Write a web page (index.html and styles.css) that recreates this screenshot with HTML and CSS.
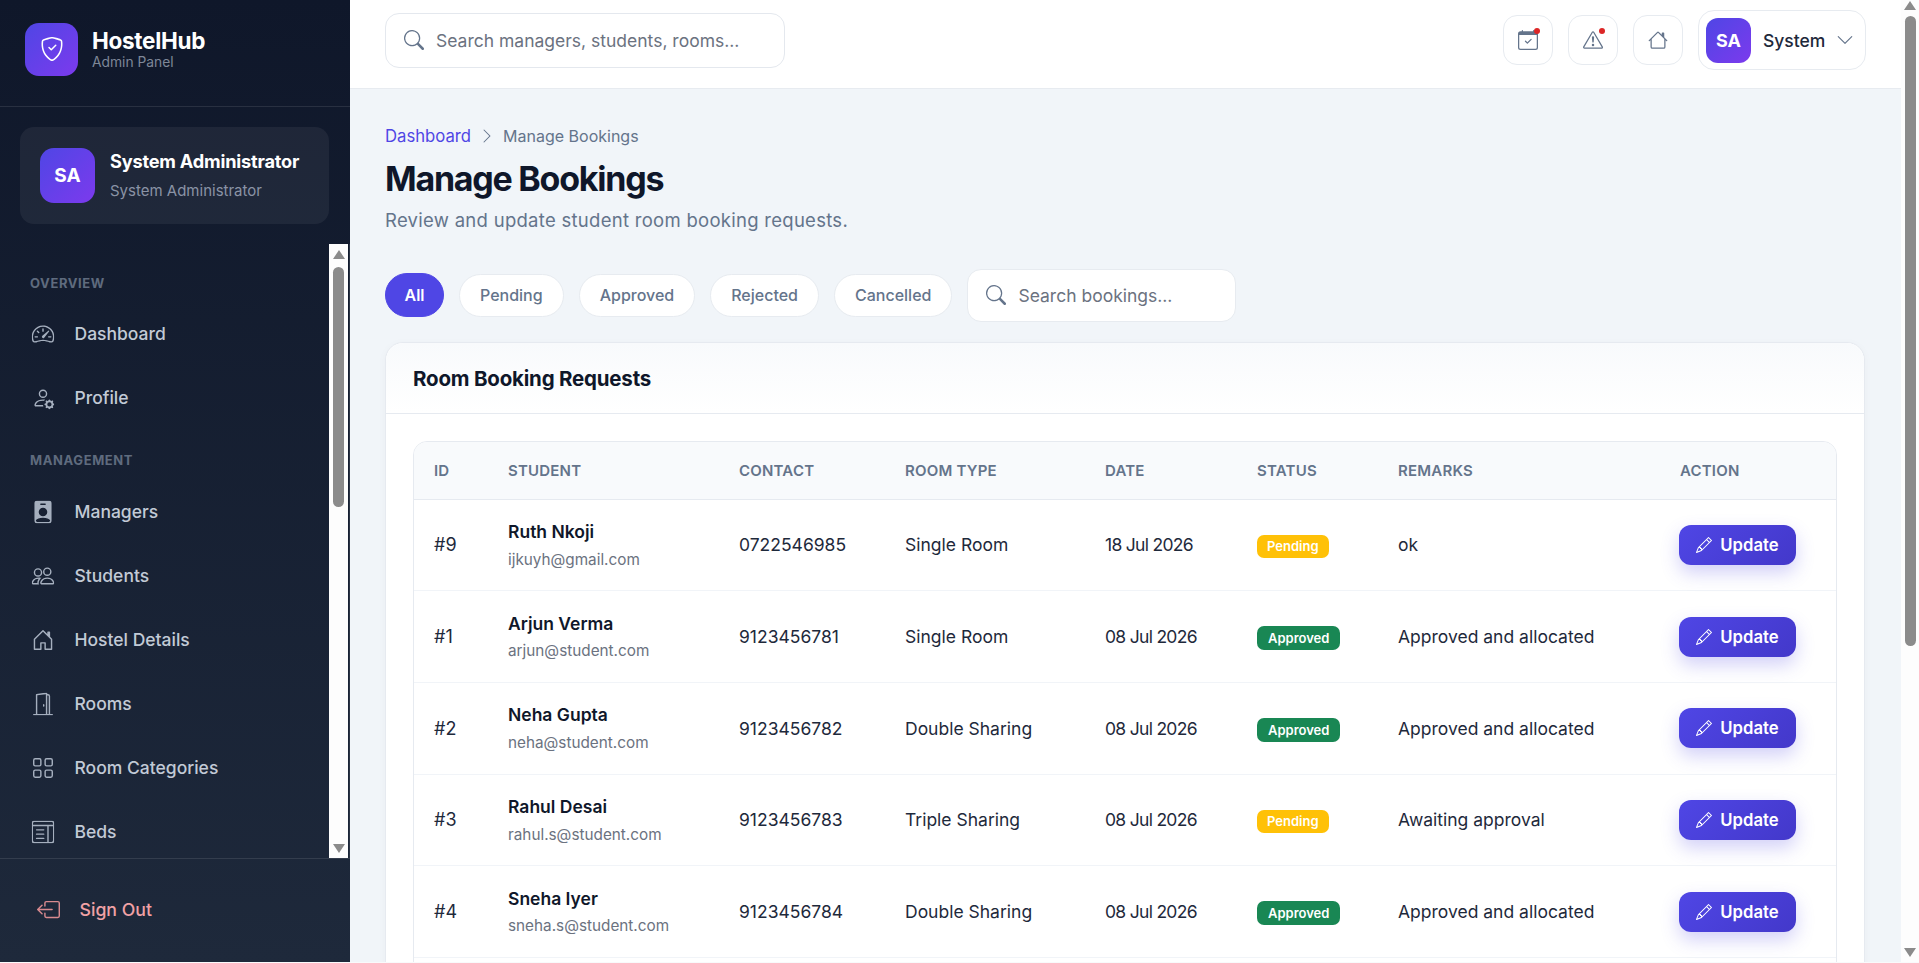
FILE: index.html
```html
<!DOCTYPE html>
<html lang="en">
<head>
<meta charset="utf-8">
<title>Manage Bookings - HostelHub</title>
<link rel="stylesheet" href="styles.css">
</head>
<body>
<svg class="sprite" width="0" height="0" aria-hidden="true">
  <symbol id="i-shield" viewBox="0 0 16 16"><path d="M5.338 1.59a61.44 61.44 0 0 0-2.837.856.481.481 0 0 0-.328.39c-.554 4.157.726 7.19 2.253 9.188a10.725 10.725 0 0 0 2.287 2.233c.346.244.652.42.893.533.12.057.218.095.293.118a.55.55 0 0 0 .101.025.615.615 0 0 0 .1-.025c.076-.023.174-.061.294-.118.24-.113.547-.29.893-.533a10.726 10.726 0 0 0 2.287-2.233c1.527-1.997 2.807-5.031 2.253-9.188a.48.48 0 0 0-.328-.39c-.651-.213-1.75-.56-2.837-.855C9.552 1.29 8.531 1.067 8 1.067c-.53 0-1.552.223-2.662.524zM5.072.56C6.157.265 7.31 0 8 0s1.843.265 2.928.56c1.11.3 2.229.655 2.887.87a1.54 1.54 0 0 1 1.044 1.262c.596 4.477-.787 7.795-2.465 9.99a11.775 11.775 0 0 1-2.517 2.453 7.159 7.159 0 0 1-1.048.625c-.28.132-.581.24-.829.24s-.548-.108-.829-.24a7.158 7.158 0 0 1-1.048-.625 11.777 11.777 0 0 1-2.517-2.453C1.928 10.487.545 7.169 1.141 2.692A1.54 1.54 0 0 1 2.185 1.43 62.456 62.456 0 0 1 5.072.56z"/><path d="M10.854 5.146a.5.5 0 0 1 0 .708l-3 3a.5.5 0 0 1-.708 0l-1.5-1.5a.5.5 0 1 1 .708-.708L7.5 7.793l2.646-2.647a.5.5 0 0 1 .708 0z"/></symbol>
  <symbol id="i-speed" viewBox="0 0 16 16"><path d="M8 4a.5.5 0 0 1 .5.5V6a.5.5 0 0 1-1 0V4.5A.5.5 0 0 1 8 4zM3.732 5.732a.5.5 0 0 1 .707 0l.915.914a.5.5 0 1 1-.708.708l-.914-.915a.5.5 0 0 1 0-.707zM2 10a.5.5 0 0 1 .5-.5h1.586a.5.5 0 0 1 0 1H2.5A.5.5 0 0 1 2 10zm9.5 0a.5.5 0 0 1 .5-.5h1.5a.5.5 0 0 1 0 1H12a.5.5 0 0 1-.5-.5zm.754-4.246a.389.389 0 0 0-.527-.02L7.547 9.31a.91.91 0 1 0 1.302 1.258l3.434-4.297a.389.389 0 0 0-.029-.518z"/><path d="M0 10a8 8 0 1 1 15.547 2.661c-.442 1.253-1.845 1.602-2.932 1.25C11.309 13.488 9.475 13 8 13c-1.474 0-3.31.488-4.615.911-1.087.352-2.49.003-2.932-1.25A7.988 7.988 0 0 1 0 10zm8-7a7 7 0 0 0-6.603 9.329c.203.575.923.876 1.68.63C4.397 12.533 6.358 12 8 12s3.604.532 4.923.96c.757.245 1.477-.056 1.68-.631A7 7 0 0 0 8 3z"/></symbol>
  <symbol id="i-pgear" viewBox="0 0 16 16"><path d="M11 5a3 3 0 1 1-6 0 3 3 0 0 1 6 0ZM8 7a2 2 0 1 0 0-4 2 2 0 0 0 0 4Zm.256 7a4.474 4.474 0 0 1-.229-1.004H3c.001-.246.154-.986.832-1.664C4.484 10.68 5.711 10 8 10c.26 0 .507.009.74.025.226-.341.496-.65.804-.918C9.077 9.038 8.564 9 8 9c-5 0-6 3-6 4s1 1 1 1h5.256Zm3.63-4.54c.18-.613 1.048-.613 1.229 0l.043.148a.64.64 0 0 0 .921.382l.136-.074c.561-.306 1.175.308.87.869l-.075.136a.64.64 0 0 0 .382.92l.149.045c.612.18.612 1.048 0 1.229l-.15.043a.64.64 0 0 0-.38.921l.074.136c.305.561-.309 1.175-.87.87l-.136-.075a.64.64 0 0 0-.92.382l-.045.149c-.18.612-1.048.612-1.229 0l-.043-.15a.64.64 0 0 0-.921-.38l-.136.074c-.561.305-1.175-.309-.87-.87l.075-.136a.64.64 0 0 0-.382-.92l-.148-.045c-.613-.18-.613-1.048 0-1.229l.148-.043a.64.64 0 0 0 .382-.921l-.074-.136c-.306-.561.308-1.175.869-.87l.136.075a.64.64 0 0 0 .92-.382l.045-.149ZM14 12.5a1.5 1.5 0 1 0-3 0 1.5 1.5 0 0 0 3 0Z"/></symbol>
  <symbol id="i-badge" viewBox="0 0 16 16"><path d="M2 2a2 2 0 0 1 2-2h8a2 2 0 0 1 2 2v12a2 2 0 0 1-2 2H4a2 2 0 0 1-2-2V2zm4.5 0a.5.5 0 0 0 0 1h3a.5.5 0 0 0 0-1h-3zM8 11a3 3 0 1 0 0-6 3 3 0 0 0 0 6zm5 2.755C12.146 12.825 10.623 12 8 12s-4.146.826-5 1.755V14a1 1 0 0 0 1 1h8a1 1 0 0 0 1-1v-.245z"/></symbol>
  <symbol id="i-people" viewBox="0 0 16 16"><path d="M15 14s1 0 1-1-1-4-5-4-5 3-5 4 1 1 1 1h8Zm-7.978-1A.261.261 0 0 1 7 12.996c.001-.264.167-1.03.76-1.72C8.312 10.629 9.282 10 11 10c1.717 0 2.687.63 3.24 1.276.593.69.758 1.457.76 1.72l-.008.002a.274.274 0 0 1-.014.002H7.022ZM11 7a2 2 0 1 0 0-4 2 2 0 0 0 0 4Zm3-2a3 3 0 1 1-6 0 3 3 0 0 1 6 0ZM6.936 9.28a5.88 5.88 0 0 0-1.23-.247A7.35 7.35 0 0 0 5 9c-4 0-5 3-5 4 0 .667.333 1 1 1h4.216A2.238 2.238 0 0 1 5 13c0-1.01.377-2.042 1.09-2.904.243-.294.526-.569.846-.816ZM4.92 10A5.493 5.493 0 0 0 4 13H1c0-.26.164-1.03.76-1.724.545-.636 1.492-1.256 3.16-1.275ZM1.5 5.5a3 3 0 1 1 6 0 3 3 0 0 1-6 0Zm3-2a2 2 0 1 0 0 4 2 2 0 0 0 0-4Z"/></symbol>
  <symbol id="i-house" viewBox="0 0 16 16"><path d="M8.707 1.5a1 1 0 0 0-1.414 0L.646 8.146a.5.5 0 0 0 .708.708L2 8.207V13.5A1.5 1.5 0 0 0 3.5 15h9a1.5 1.5 0 0 0 1.5-1.5V8.207l.646.647a.5.5 0 0 0 .708-.708L13 5.793V2.5a.5.5 0 0 0-.5-.5h-1a.5.5 0 0 0-.5.5v1.293L8.707 1.5ZM13 7.207V13.5a.5.5 0 0 1-.5.5h-9a.5.5 0 0 1-.5-.5V7.207l5-5 5 5Z"/></symbol>
  <symbol id="i-hdoor" viewBox="0 0 16 16"><path d="M8.354 1.146a.5.5 0 0 0-.708 0l-6 6A.5.5 0 0 0 1.5 7.5v7a.5.5 0 0 0 .5.5h4.5a.5.5 0 0 0 .5-.5v-4h2v4a.5.5 0 0 0 .5.5H14a.5.5 0 0 0 .5-.5v-7a.5.5 0 0 0-.146-.354L13 5.793V2.5a.5.5 0 0 0-.5-.5h-1a.5.5 0 0 0-.5.5v1.293L8.354 1.146ZM2.5 14V7.707l5.5-5.5 5.5 5.5V14H10v-4a.5.5 0 0 0-.5-.5h-3a.5.5 0 0 0-.5.5v4H2.5Z"/></symbol>
  <symbol id="i-door" viewBox="0 0 16 16"><path d="M8.5 10c-.276 0-.5-.448-.5-1s.224-1 .5-1 .5.448.5 1-.224 1-.5 1z"/><path d="M10.828.122A.5.5 0 0 1 11 .5V1h.5A1.5 1.5 0 0 1 13 2.5V15h1.5a.5.5 0 0 1 0 1h-13a.5.5 0 0 1 0-1H3V1.5a.5.5 0 0 1 .43-.495l7-1a.5.5 0 0 1 .398.117zM11.5 2H11v13h1V2.5a.5.5 0 0 0-.5-.5zM4 1.934V15h6V1.077l-6 .857z"/></symbol>
  <symbol id="i-grid" viewBox="0 0 16 16"><path d="M1 2.5A1.5 1.5 0 0 1 2.5 1h3A1.5 1.5 0 0 1 7 2.5v3A1.5 1.5 0 0 1 5.5 7h-3A1.5 1.5 0 0 1 1 5.5v-3zM2.5 2a.5.5 0 0 0-.5.5v3a.5.5 0 0 0 .5.5h3a.5.5 0 0 0 .5-.5v-3a.5.5 0 0 0-.5-.5h-3zm6.5.5A1.5 1.5 0 0 1 10.5 1h3A1.5 1.5 0 0 1 15 2.5v3A1.5 1.5 0 0 1 13.5 7h-3A1.5 1.5 0 0 1 9 5.5v-3zm1.5-.5a.5.5 0 0 0-.5.5v3a.5.5 0 0 0 .5.5h3a.5.5 0 0 0 .5-.5v-3a.5.5 0 0 0-.5-.5h-3zM1 10.5A1.5 1.5 0 0 1 2.5 9h3A1.5 1.5 0 0 1 7 10.5v3A1.5 1.5 0 0 1 5.5 15h-3A1.5 1.5 0 0 1 1 13.5v-3zm1.5-.5a.5.5 0 0 0-.5.5v3a.5.5 0 0 0 .5.5h3a.5.5 0 0 0 .5-.5v-3a.5.5 0 0 0-.5-.5h-3zm6.5.5A1.5 1.5 0 0 1 10.5 9h3a1.5 1.5 0 0 1 1.5 1.5v3a1.5 1.5 0 0 1-1.5 1.5h-3A1.5 1.5 0 0 1 9 13.5v-3zm1.5-.5a.5.5 0 0 0-.5.5v3a.5.5 0 0 0 .5.5h3a.5.5 0 0 0 .5-.5v-3a.5.5 0 0 0-.5-.5h-3z"/></symbol>
  <symbol id="i-beds" viewBox="0 0 16 16"><path d="M3 6.5a.5.5 0 0 1 .5-.5h5a.5.5 0 0 1 0 1h-5a.5.5 0 0 1-.5-.5zm0 3a.5.5 0 0 1 .5-.5h5a.5.5 0 0 1 0 1h-5a.5.5 0 0 1-.5-.5zm.5 2.5a.5.5 0 0 0 0 1h5a.5.5 0 0 0 0-1h-5z"/><path d="M14 0a2 2 0 0 1 2 2v12a2 2 0 0 1-2 2H2a2 2 0 0 1-2-2V2a2 2 0 0 1 2-2h12zM2 1a1 1 0 0 0-1 1v1h14V2a1 1 0 0 0-1-1H2zM1 4v10a1 1 0 0 0 1 1h9V4H1zm14 0h-3v11h2a1 1 0 0 0 1-1V4z"/></symbol>
  <symbol id="i-out" viewBox="0 0 16 16"><path d="M6 12.5a.5.5 0 0 0 .5.5h8a.5.5 0 0 0 .5-.5v-9a.5.5 0 0 0-.5-.5h-8a.5.5 0 0 0-.5.5v2a.5.5 0 0 1-1 0v-2A1.5 1.5 0 0 1 6.5 2h8A1.5 1.5 0 0 1 16 3.5v9a1.5 1.5 0 0 1-1.5 1.5h-8A1.5 1.5 0 0 1 5 12.5v-2a.5.5 0 0 1 1 0v2z"/><path d="M.146 8.354a.5.5 0 0 1 0-.708l3-3a.5.5 0 1 1 .708.708L1.707 7.5H10.5a.5.5 0 0 1 0 1H1.707l2.147 2.146a.5.5 0 0 1-.708.708l-3-3z"/></symbol>
  <symbol id="i-search" viewBox="0 0 16 16"><path d="M11.742 10.344a6.5 6.5 0 1 0-1.397 1.398h-.001c.03.04.062.078.098.115l3.85 3.85a1 1 0 0 0 1.415-1.414l-3.85-3.85a1.007 1.007 0 0 0-.115-.1zM12 6.5a5.5 5.5 0 1 1-11 0 5.5 5.5 0 0 1 11 0z"/></symbol>
  <symbol id="i-cal" viewBox="0 0 16 16"><path d="M10.854 7.146a.5.5 0 0 1 0 .708l-3 3a.5.5 0 0 1-.708 0l-1.5-1.5a.5.5 0 1 1 .708-.708L7.5 9.793l2.646-2.647a.5.5 0 0 1 .708 0z"/><path d="M3.5 0a.5.5 0 0 1 .5.5V1h8V.5a.5.5 0 0 1 1 0V1h1a2 2 0 0 1 2 2v11a2 2 0 0 1-2 2H2a2 2 0 0 1-2-2V3a2 2 0 0 1 2-2h1V.5a.5.5 0 0 1 .5-.5zM1 4v10a1 1 0 0 0 1 1h12a1 1 0 0 0 1-1V4H1z"/></symbol>
  <symbol id="i-warn" viewBox="0 0 16 16"><path d="M7.938 2.016A.13.13 0 0 1 8.002 2a.13.13 0 0 1 .063.016.146.146 0 0 1 .054.057l6.857 11.667c.036.06.035.124.002.183a.163.163 0 0 1-.054.06.116.116 0 0 1-.066.017H1.146a.115.115 0 0 1-.066-.017.163.163 0 0 1-.054-.06.176.176 0 0 1 .002-.183L7.884 2.073a.147.147 0 0 1 .054-.057zm1.044-.45a1.13 1.13 0 0 0-1.96 0L.165 13.233c-.457.778.091 1.767.98 1.767h13.713c.889 0 1.438-.99.98-1.767L8.982 1.566z"/><path d="M7.002 12a1 1 0 1 1 2 0 1 1 0 0 1-2 0zM7.1 5.995a.905.905 0 1 1 1.8 0l-.35 3.507a.552.552 0 0 1-1.1 0L7.1 5.995z"/></symbol>
  <symbol id="i-down" viewBox="0 0 16 16"><path d="M1.646 4.646a.5.5 0 0 1 .708 0L8 10.293l5.646-5.647a.5.5 0 0 1 .708.708l-6 6a.5.5 0 0 1-.708 0l-6-6a.5.5 0 0 1 0-.708z"/></symbol>
  <symbol id="i-right" viewBox="0 0 16 16"><path d="M4.646 1.646a.5.5 0 0 1 .708 0l6 6a.5.5 0 0 1 0 .708l-6 6a.5.5 0 0 1-.708-.708L10.293 8 4.646 2.354a.5.5 0 0 1 0-.708z"/></symbol>
  <symbol id="i-pencil" viewBox="0 0 16 16"><path d="M12.146.146a.5.5 0 0 1 .708 0l3 3a.5.5 0 0 1 0 .708l-10 10a.5.5 0 0 1-.168.11l-5 2a.5.5 0 0 1-.65-.65l2-5a.5.5 0 0 1 .11-.168l10-10zM11.207 2.5 13.5 4.793 14.793 3.5 12.5 1.207 11.207 2.5zm1.586 3L10.5 3.207 4 9.707V10h.5a.5.5 0 0 1 .5.5v.5h.5a.5.5 0 0 1 .5.5v.5h.293l6.5-6.5zm-9.761 5.175-.106.106-1.528 3.821 3.821-1.528.106-.106A.5.5 0 0 1 5 12.5V12h-.5a.5.5 0 0 1-.5-.5V11h-.5a.5.5 0 0 1-.468-.325z"/></symbol>
</svg>

<div class="app">
  <aside class="sidebar">
    <div class="brand">
      <div class="brand-logo"><svg class="ico ico-logo"><use href="#i-shield"/></svg></div>
      <div class="brand-text">
        <div class="brand-name">HostelHub</div>
        <div class="brand-sub">Admin Panel</div>
      </div>
    </div>
    <div class="user-card">
      <div class="avatar avatar-lg">SA</div>
      <div class="user-text">
        <div class="user-name">System Administrator</div>
        <div class="user-role">System Administrator</div>
      </div>
    </div>
    <div class="nav-row">
      <nav class="nav">
        <div class="nav-label">OVERVIEW</div>
        <a class="nav-item"><svg class="ico ico-nav"><use href="#i-speed"/></svg>Dashboard</a>
        <a class="nav-item"><svg class="ico ico-nav"><use href="#i-pgear"/></svg>Profile</a>
        <div class="nav-label nav-label-next">MANAGEMENT</div>
        <a class="nav-item"><svg class="ico ico-nav"><use href="#i-badge"/></svg>Managers</a>
        <a class="nav-item"><svg class="ico ico-nav"><use href="#i-people"/></svg>Students</a>
        <a class="nav-item"><svg class="ico ico-nav"><use href="#i-hdoor"/></svg>Hostel Details</a>
        <a class="nav-item"><svg class="ico ico-nav"><use href="#i-door"/></svg>Rooms</a>
        <a class="nav-item"><svg class="ico ico-nav"><use href="#i-grid"/></svg>Room Categories</a>
        <a class="nav-item"><svg class="ico ico-nav"><use href="#i-beds"/></svg>Beds</a>
      </nav>
      <div class="scrollbar scrollbar-side">
        <span class="arrow arrow-up"></span>
        <span class="thumb thumb-side"></span>
        <span class="arrow arrow-down"></span>
      </div>
    </div>
    <div class="side-footer">
      <a class="signout"><svg class="ico ico-out"><use href="#i-out"/></svg>Sign Out</a>
    </div>
  </aside>

  <div class="main">
    <header class="topbar">
      <label class="top-search">
        <svg class="ico ico-search"><use href="#i-search"/></svg>
        <input class="top-input" type="text" placeholder="Search managers, students, rooms...">
      </label>
      <div class="top-actions">
        <button class="icon-btn"><svg class="ico ico-top"><use href="#i-cal"/></svg><span class="dot"></span></button>
        <button class="icon-btn"><svg class="ico ico-top"><use href="#i-warn"/></svg><span class="dot"></span></button>
        <button class="icon-btn"><svg class="ico ico-top"><use href="#i-house"/></svg></button>
        <div class="user-pill">
          <div class="avatar avatar-sm">SA</div>
          <span class="pill-name">System</span>
          <svg class="ico ico-chev"><use href="#i-down"/></svg>
        </div>
      </div>
    </header>

    <main class="content">
      <div class="breadcrumb">
        <a class="crumb-link">Dashboard</a>
        <svg class="ico ico-crumb"><use href="#i-right"/></svg>
        <span>Manage Bookings</span>
      </div>
      <h1 class="title">Manage Bookings</h1>
      <p class="subtitle">Review and update student room booking requests.</p>

      <div class="filters">
        <button class="chip chip-active">All</button>
        <button class="chip">Pending</button>
        <button class="chip">Approved</button>
        <button class="chip">Rejected</button>
        <button class="chip">Cancelled</button>
        <label class="filter-search">
          <svg class="ico ico-search"><use href="#i-search"/></svg>
          <input class="filter-input" type="text" placeholder="Search bookings...">
        </label>
      </div>

      <section class="card">
        <div class="card-head">Room Booking Requests</div>
        <div class="card-body">
          <div class="table-wrap">
            <table class="table">
              <colgroup>
                <col class="c-id"><col class="c-student"><col class="c-contact"><col class="c-room"><col class="c-date"><col class="c-status"><col class="c-remarks"><col class="c-action">
              </colgroup>
              <thead>
                <tr><th>ID</th><th>Student</th><th>Contact</th><th>Room Type</th><th>Date</th><th>Status</th><th>Remarks</th><th>Action</th></tr>
              </thead>
              <tbody>
                <tr>
                  <td class="t-id">#9</td>
                  <td><div class="s-name">Ruth Nkoji</div><div class="s-mail">ijkuyh@gmail.com</div></td>
                  <td>0722546985</td><td>Single Room</td><td class="t-date">18 Jul 2026</td>
                  <td><span class="badge badge-pending">Pending</span></td>
                  <td>ok</td>
                  <td><button class="update"><svg class="ico ico-pen"><use href="#i-pencil"/></svg>Update</button></td>
                </tr>
                <tr>
                  <td class="t-id">#1</td>
                  <td><div class="s-name">Arjun Verma</div><div class="s-mail">arjun@student.com</div></td>
                  <td>9123456781</td><td>Single Room</td><td class="t-date">08 Jul 2026</td>
                  <td><span class="badge badge-approved">Approved</span></td>
                  <td>Approved and allocated</td>
                  <td><button class="update"><svg class="ico ico-pen"><use href="#i-pencil"/></svg>Update</button></td>
                </tr>
                <tr>
                  <td class="t-id">#2</td>
                  <td><div class="s-name">Neha Gupta</div><div class="s-mail">neha@student.com</div></td>
                  <td>9123456782</td><td>Double Sharing</td><td class="t-date">08 Jul 2026</td>
                  <td><span class="badge badge-approved">Approved</span></td>
                  <td>Approved and allocated</td>
                  <td><button class="update"><svg class="ico ico-pen"><use href="#i-pencil"/></svg>Update</button></td>
                </tr>
                <tr>
                  <td class="t-id">#3</td>
                  <td><div class="s-name">Rahul Desai</div><div class="s-mail">rahul.s@student.com</div></td>
                  <td>9123456783</td><td>Triple Sharing</td><td class="t-date">08 Jul 2026</td>
                  <td><span class="badge badge-pending">Pending</span></td>
                  <td>Awaiting approval</td>
                  <td><button class="update"><svg class="ico ico-pen"><use href="#i-pencil"/></svg>Update</button></td>
                </tr>
                <tr>
                  <td class="t-id">#4</td>
                  <td><div class="s-name">Sneha Iyer</div><div class="s-mail">sneha.s@student.com</div></td>
                  <td>9123456784</td><td>Double Sharing</td><td class="t-date">08 Jul 2026</td>
                  <td><span class="badge badge-approved">Approved</span></td>
                  <td>Approved and allocated</td>
                  <td><button class="update"><svg class="ico ico-pen"><use href="#i-pencil"/></svg>Update</button></td>
                </tr>
              </tbody>
            </table>
          </div>
        </div>
      </section>
    </main>
  </div>

  <div class="scrollbar scrollbar-page">
    <span class="arrow arrow-up"></span>
    <span class="thumb thumb-page"></span>
    <span class="arrow arrow-down"></span>
  </div>
</div>
</body>
</html>
```

FILE: styles.css
```css
* { box-sizing: border-box; }
html, body { margin: 0; height: 100%; overflow: hidden; }
body {
  background: #f9fafb;
  font-family: Inter, "Noto Sans", "Liberation Sans", sans-serif;
  color: #1e293b;
}
.sprite { position: absolute; }
.ico { fill: currentColor; flex: none; display: block; }
button, input { font-family: inherit; }

.app { display: flex; height: 962px; }

/* Sidebar */
.sidebar {
  width: 350px;
  flex: none;
  display: flex;
  flex-direction: column;
  background: linear-gradient(180deg, #0f172a 0%, #1e293b 100%);
}
.brand {
  height: 107px;
  flex: none;
  display: flex;
  align-items: center;
  gap: 14px;
  padding: 0 0 8px 25px;
  border-bottom: 1px solid rgba(255,255,255,.1);
}
.brand-logo {
  width: 53px;
  height: 53px;
  border-radius: 14px;
  display: flex;
  align-items: center;
  justify-content: center;
  color: #fff;
  background: linear-gradient(135deg, #4f46e5, #7c3aed);
}
.ico-logo { width: 24px; height: 24px; }
.brand-name { font-size: 22.5px; font-weight: 700; line-height: 26px; color: #fff; letter-spacing: -.3px; }
.brand-sub { font-size: 13.8px; line-height: 17px; color: #7e8798; }
.user-card {
  flex: none;
  height: 97px;
  width: 309px;
  margin: 20px 0 20px 20px;
  border-radius: 14px;
  background: rgba(255,255,255,.06);
  display: flex;
  align-items: center;
  gap: 15px;
  padding-left: 20px;
}
.avatar {
  display: flex;
  align-items: center;
  justify-content: center;
  flex: none;
  color: #fff;
  font-weight: 700;
  background: linear-gradient(135deg, #4f46e5, #7c3aed);
}
.avatar-lg { width: 55px; height: 55px; border-radius: 14px; font-size: 19px; }
.user-name { font-size: 18.2px; font-weight: 700; line-height: 22px; color: #fff; letter-spacing: -.2px; white-space: nowrap; }
.user-role { font-size: 15px; line-height: 20px; margin-top: 9px; color: #8a93a5; white-space: nowrap; }

.nav-row { flex: 1; min-height: 0; display: flex; padding-right: 1px; border-right: 1px solid #2a3444; }
.nav { flex: 1; min-width: 0; overflow: hidden; padding-top: 31px; }
.nav-label {
  font-size: 13px;
  font-weight: 700;
  line-height: 16px;
  letter-spacing: .6px;
  color: #5f6b7e;
  padding-left: 30px;
  margin-bottom: 10.5px;
}
.nav-label-next { margin-top: 22.5px; margin-bottom: 11.5px; }
.nav-item {
  height: 64px;
  display: flex;
  align-items: center;
  gap: 19.5px;
  padding-left: 31px;
  font-size: 17.5px;
  font-weight: 500;
  color: #c2cad6;
}
.ico-nav { width: 24px; height: 24px; color: #a5afbe; transform: scale(.95); }

.side-footer {
  flex: none;
  height: 104px;
  border-top: 1px solid rgba(255,255,255,.1);
  display: flex;
  align-items: center;
  padding: 0 0 2px 37px;
}
.signout { display: flex; align-items: center; gap: 19.5px; font-size: 17.7px; font-weight: 500; color: #f1a1a5; }
.ico-out { width: 23px; height: 23px; color: #d98a8f; }

/* Fake scrollbars */
.scrollbar {
  flex: none;
  display: flex;
  flex-direction: column;
  align-items: center;
  background: #fdfdfd;
}
.scrollbar-side { width: 19px; padding: 6px 0 5px; }
.scrollbar-page { width: 18px; padding: 1px 0 5px; }
.arrow { width: 0; height: 0; border-left: 6.5px solid transparent; border-right: 6.5px solid transparent; flex: none; }
.arrow-up { border-bottom: 9px solid #8b8b8b; }
.arrow-down { border-top: 9px solid #8b8b8b; margin-top: auto; }
.thumb { width: 11px; background: #8b8b8b; border-radius: 6px; flex: none; }
.thumb-side { height: 240px; margin-top: 8px; }
.thumb-page { height: 630px; margin-top: 6px; }

/* Main */
.main { flex: 1; min-width: 0; display: flex; flex-direction: column; background: #f1f5f9; }
.topbar {
  flex: none;
  height: 89px;
  background: #fff;
  border-bottom: 1px solid #e7ebf0;
  display: flex;
  align-items: center;
  justify-content: space-between;
  padding: 0 35px 8px 35px;
}
.top-search {
  width: 400px;
  height: 55px;
  border: 1px solid #e4e8ee;
  border-radius: 14px;
  display: flex;
  align-items: center;
  gap: 12px;
  padding-left: 18px;
  color: #64748b;
}
.ico-search { width: 20px; height: 20px; }
.top-input, .filter-input {
  flex: 1;
  min-width: 0;
  border: 0;
  outline: 0;
  background: transparent;
  font-size: 17.5px;
  color: #1e293b;
  padding: 0;
}
.top-input::placeholder, .filter-input::placeholder { color: #6b7280; opacity: 1; }
.top-actions { display: flex; align-items: center; gap: 15px; }
.icon-btn {
  position: relative;
  width: 50px;
  height: 50px;
  border: 1px solid #e7ebf0;
  border-radius: 14px;
  background: #fff;
  display: flex;
  align-items: center;
  justify-content: center;
  color: #64748b;
  padding: 0;
}
.ico-top { width: 20px; height: 20px; }
.dot {
  position: absolute;
  top: 12px;
  right: 12px;
  width: 6px;
  height: 6px;
  border-radius: 50%;
  background: #dc2626;
}
.user-pill {
  width: 168px;
  height: 60px;
  border: 1px solid #e7ebf0;
  border-radius: 16px;
  display: flex;
  align-items: center;
  padding-left: 7px;
}
.avatar-sm { width: 45px; height: 45px; border-radius: 12px; font-size: 18px; }
.pill-name { margin-left: 12px; font-size: 17.5px; font-weight: 500; color: #1e293b; }
.ico-chev { width: 18px; height: 18px; margin-left: 11px; color: #64748b; }

.content { flex: 1; min-height: 0; overflow: hidden; padding: 36px 36px 0 35px; }
.breadcrumb { display: flex; align-items: center; gap: 8px; font-size: 16px; line-height: 22px; color: #64748b; }
.crumb-link { color: #4f46e5; font-size: 16.7px; }
.ico-crumb { width: 16px; height: 16px; color: #64748b; }
.title { margin: 10px 0 0; font-size: 34px; line-height: 44px; font-weight: 700; color: #0f172a; letter-spacing: -1.25px; }
.subtitle { margin: 6px 0 0; font-size: 18.5px; line-height: 26px; letter-spacing: .28px; color: #64748b; }

.filters { display: flex; align-items: center; gap: 15px; margin-top: 35px; height: 54px; }
.chip {
  height: 43px;
  padding: 0 20px;
  border: 1px solid #e7ebf0;
  border-radius: 22px;
  background: #fff;
  font-size: 16px;
  font-weight: 500;
  color: #64748b;
}
.chip-active { height: 44px; width: 59px; padding: 0; border-color: #4f46e5; background: #4f46e5; color: #fff; font-weight: 600; }
.filter-search {
  width: 269px;
  height: 53px;
  border: 1px solid #e7ebf0;
  border-radius: 14px;
  background: #fff;
  display: flex;
  align-items: center;
  gap: 12px;
  padding-left: 18px;
  color: #64748b;
}

.card {
  margin-top: 20px;
  background: #fff;
  border: 1px solid #e6eaf0;
  border-radius: 18px;
  box-shadow: 0 2px 10px rgba(15,23,42,.03);
}
.card-head {
  height: 71px;
  display: flex;
  align-items: center;
  padding-left: 27px;
  font-size: 20.5px;
  font-weight: 700;
  color: #0f172a;
  letter-spacing: -.2px;
  border-bottom: 1px solid #e6eaf0;
  border-radius: 18px 18px 0 0;
  background: linear-gradient(180deg, #f8fafc, #fff);
}
.card-body { padding: 27px 27px 30px; }
.table-wrap { border: 1px solid #e6eaf0; border-radius: 14px; overflow: hidden; min-height: 560px; }
.table { width: 100%; border-collapse: collapse; table-layout: fixed; }
.c-id { width: 74px; }
.c-student { width: 231px; }
.c-contact { width: 166px; }
.c-room { width: 200px; }
.c-date { width: 152px; }
.c-status { width: 141px; }
.c-remarks { width: 282px; }
.table th {
  height: 57px;
  padding: 0 0 0 20px;
  text-align: left;
  font-size: 15px;
  font-weight: 600;
  letter-spacing: .2px;
  text-transform: uppercase;
  color: #64748b;
  background: #f8fafc;
  border-bottom: 1px solid #e6eaf0;
}
.table td {
  height: 91.7px;
  padding: 0 0 0 20px;
  font-size: 17.5px;
  color: #1e293b;
  border-bottom: 1px solid #f1f4f8;
  white-space: nowrap;
}
.table .t-id { font-size: 18px; }
.table .t-date { letter-spacing: -.7px; }
.s-name { font-size: 17.5px; font-weight: 600; line-height: 22px; margin-top: 1px; color: #0f172a; }
.s-mail { font-size: 15.3px; line-height: 20px; margin-top: 6.5px; color: #6b7280; }
.badge {
  display: inline-flex;
  align-items: center;
  height: 24px;
  margin-top: 3px;
  padding: 0 10px;
  border-radius: 7px;
  font-size: 13px;
  font-weight: 600;
  color: #fff;
  vertical-align: middle;
}
.badge-pending { background: #ffc107; height: 23px; }
.badge-approved { background: #198754; padding: 0 11px; }
.update {
  height: 40px;
  width: 117px;
  margin-left: -1px;
  display: inline-flex;
  align-items: center;
  justify-content: center;
  gap: 8px;
  border: 0;
  border-radius: 12px;
  background: linear-gradient(135deg, #4f46e5, #4338ca);
  box-shadow: 0 8px 18px rgba(79,70,229,.25);
  color: #fff;
  font-size: 16.7px;
  font-weight: 600;
  padding: 0;
}
.ico-pen { width: 16px; height: 16px; }
```
